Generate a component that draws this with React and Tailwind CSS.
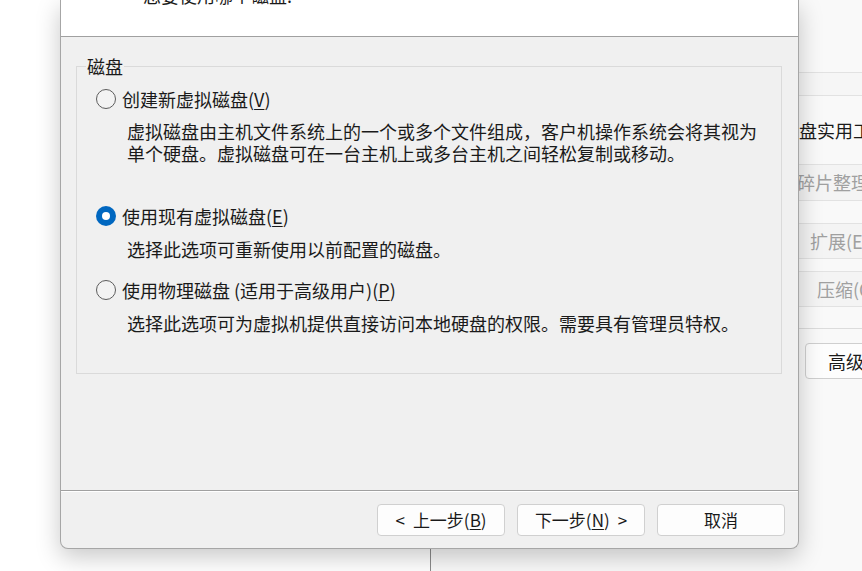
const font = { fontFamily: '"Noto Sans CJK SC", "Noto Sans", sans-serif' };

const Radio = ({ checked }) =>
  checked ? (
    <span className="w-[20px] h-[20px] rounded-full bg-[#0067c0] flex items-center justify-center shrink-0">
      <span className="w-[8px] h-[8px] rounded-full bg-white" />
    </span>
  ) : (
    <span className="w-[20px] h-[20px] rounded-full border border-[#5c5c5c] bg-[#f3f3f3] shrink-0" />
  );

const Option = ({ checked, label, hotkey, suffix = ')', className = '' }) => (
  <div className={`flex items-center gap-[6px] h-[22px] ${className}`}>
    <Radio checked={checked} />
    <span className="leading-[22px] text-[#1a1a1a]">
      {label}
      <span className="underline underline-offset-2">{hotkey}</span>
      {suffix}
    </span>
  </div>
);

const Button = ({ children }) => (
  <button className="w-[128px] h-[32px] rounded-[4px] border border-[#d0d0d0] bg-[#fdfdfd] text-[17px] text-[#1a1a1a] flex items-center justify-center">
    {children}
  </button>
);

export default function App() {
  return (
    <div className="relative w-[862px] h-[571px] overflow-hidden bg-white" style={font}>
      {/* background window */}
      <div className="absolute left-[430px] top-0 w-[500px] h-[571px] bg-[#f9f9f9] border-l border-[#8a8a8a]" />
      <div className="absolute left-[781px] top-0 w-[200px] flex flex-col text-[18px]">
        <div className="h-[72px]" />
        <div className="h-[24px] border-y border-[#e2e2e2] bg-[#f6f6f6]" />
        <div className="h-[68px] flex items-center text-[#1a1a1a]">磁盘实用工具</div>
        <div className="h-[37px] border-y border-[#e2e2e2] bg-[#f4f4f4] flex items-center pl-[16px] text-[#a0a0a0]">碎片整理(D)</div>
        <div className="mt-[22px] h-[36px] border-y border-[#e2e2e2] bg-[#f4f4f4] flex items-center pl-[29px] text-[#a0a0a0]">扩展(E)...</div>
        <div className="mt-[12px] h-[36px] border-y border-[#e2e2e2] bg-[#f4f4f4] flex items-center pl-[36px] text-[#a0a0a0]">压缩(C)...</div>
        <div className="mt-[21px] border-t border-[#dcdcdc]" />
        <div className="mt-[14px] ml-[24px] h-[36px] rounded-[4px] border border-[#cfcfcf] bg-[#fdfdfd] flex items-center pl-[22px] text-[#1a1a1a]">高级...</div>
      </div>

      {/* dialog */}
      <div className="absolute left-[60px] top-0 w-[739px] h-[549px] flex flex-col bg-[#f0f0f0] border-x border-b border-[#a6a6a6] rounded-b-[8px] shadow-[0_8px_24px_rgba(0,0,0,0.22)] overflow-hidden text-[18px]">
        <div className="h-[36px] bg-white shrink-0 overflow-hidden">
          <div className="-mt-[16px] ml-[82px] leading-[22px] text-[#1a1a1a]">您要使用哪个磁盘:</div>
        </div>
        <div className="h-[1px] bg-[#a0a0a0] shrink-0" />

        <div className="flex-1">
          <fieldset className="mt-[18px] ml-[15px] mr-[16px] border border-[#dadada] pl-[19px] pb-[39px]">
            <legend className="-ml-[10px] px-[1px] leading-[22px] text-[#1a1a1a]">磁盘</legend>
            <Option className="mt-[11px]" label="创建新虚拟磁盘(" hotkey="V" />
            <div className="mt-[10px] ml-[31px] leading-[22px] text-[#1a1a1a]">
              虚拟磁盘由主机文件系统上的一个或多个文件组成，客户机操作系统会将其视为
              <br />
              单个硬盘。虚拟磁盘可在一台主机上或多台主机之间轻松复制或移动。
            </div>
            <Option checked className="mt-[41px]" label="使用现有虚拟磁盘(" hotkey="E" />
            <div className="mt-[11px] ml-[31px] leading-[22px] text-[#1a1a1a]">选择此选项可重新使用以前配置的磁盘。</div>
            <Option className="mt-[19px]" label="使用物理磁盘 (适用于高级用户)(" hotkey="P" />
            <div className="mt-[11px] ml-[31px] leading-[22px] text-[#1a1a1a]">
              选择此选项可为虚拟机提供直接访问本地硬盘的权限。需要具有管理员特权。
            </div>
          </fieldset>
        </div>

        <div className="h-[1px] bg-[#a0a0a0] shrink-0" />
        <div className="h-[1px] bg-white shrink-0" />
        <div className="flex justify-end gap-[12px] pt-[12px] pb-[12px] pr-[13px] shrink-0">
          <Button>
            <span className="mr-[8px]">&lt;</span>上一步(<span className="underline underline-offset-2">B</span>)
          </Button>
          <Button>
            下一步(<span className="underline underline-offset-2">N</span>)<span className="ml-[8px]">&gt;</span>
          </Button>
          <Button>取消</Button>
        </div>
      </div>
    </div>
  );
}
